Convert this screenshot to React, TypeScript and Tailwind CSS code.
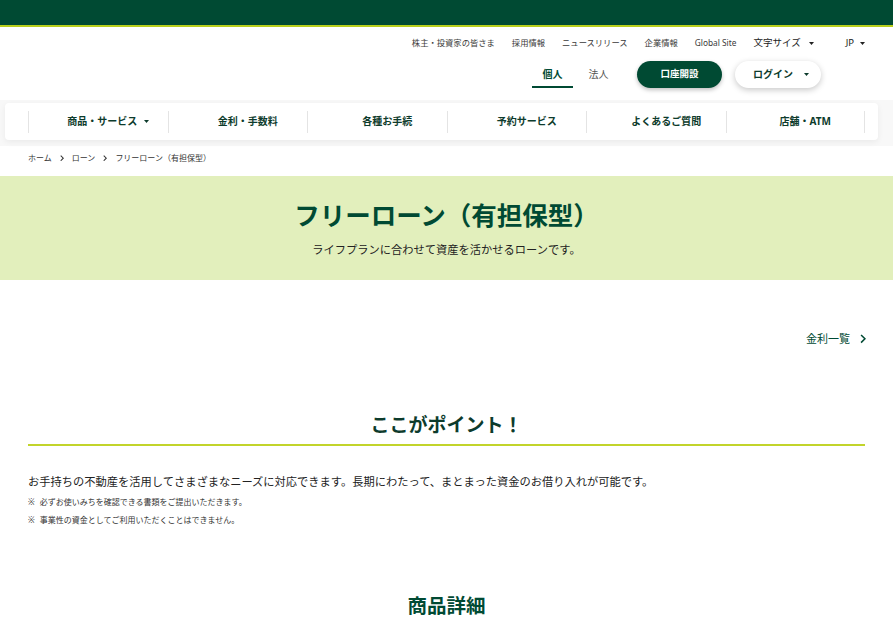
import type { ReactNode } from "react";

const topLinks = ["株主・投資家の皆さま", "採用情報", "ニュースリリース", "企業情報", "Global Site"];
const navItems = ["商品・サービス", "金利・手数料", "各種お手続", "予約サービス", "よくあるご質問", "店舗・ATM"];

function Caret({ className = "" }: { className?: string }) {
  return (
    <svg width="5" height="3" viewBox="0 0 5 3" className={className} fill="currentColor">
      <path d="M0 0h5L2.5 3z" />
    </svg>
  );
}

function Chevron({ size = 6, className = "" }: { size?: number; className?: string }) {
  return (
    <svg
      width={size}
      height={size * 1.6}
      viewBox="0 0 6 10"
      fill="none"
      stroke="currentColor"
      strokeWidth="1.6"
      className={className}
    >
      <path d="M1 1l4 4-4 4" />
    </svg>
  );
}

function Crumb({ children, last = false }: { children: ReactNode; last?: boolean }) {
  return (
    <span className="flex items-center">
      <span>{children}</span>
      {!last && <Chevron size={4} className="mx-[8px] text-[#333]" />}
    </span>
  );
}

function Note({ children }: { children: ReactNode }) {
  return (
    <p className="mt-[6px] flex text-[8px] leading-[12px] text-[#333]">
      <span className="mr-[5px]">※</span>
      {children}
    </p>
  );
}

export default function App() {
  return (
    <div className="min-h-[1200px] bg-white text-[#333] font-['Noto_Sans','Noto_Sans_CJK_JP',sans-serif]">
      {/* brand bar */}
      <div className="h-[25px] bg-[#004a33]" />
      <div className="h-[2px] bg-[#b8cf1c]" />

      {/* header */}
      <header className="h-[73px] bg-white">
        <div className="ml-[28px] w-[837px]">
          <div className="flex h-[32px] items-center justify-end gap-[17px] text-[8.3px] text-[#3a3a3a]">
            {topLinks.map((l) => (
              <a key={l} className="whitespace-nowrap">
                {l}
              </a>
            ))}
            <span className="flex items-center gap-[8px] text-[9.5px] text-[#222]">
              文字サイズ
              <Caret />
            </span>
            <span className="ml-[15px] flex items-center gap-[6px] text-[9.5px] text-[#222]">
              JP
              <Caret />
            </span>
          </div>

          <div className="mt-[2px] flex h-[27px] items-center justify-end pr-[44px]">
            <div className="flex h-full gap-[5px]">
              <span className="flex w-[41px] items-center justify-center border-b-2 border-[#004a33] pt-[2px] text-[10px] font-bold text-[#004a33]">
                個人
              </span>
              <span className="flex w-[41px] items-center justify-center text-[10px] text-[#555]">法人</span>
            </div>
            <button className="ml-[18px] flex h-[27px] w-[85px] items-center justify-center rounded-full bg-[#004a33] text-[9.5px] font-bold text-white shadow-[0_2px_4px_rgba(0,0,0,0.25)]">
              口座開設
            </button>
            <button className="ml-[13px] flex h-[27px] w-[86px] items-center justify-center gap-[11px] rounded-full bg-white pl-[6px] text-[10px] font-bold text-[#0d3b2c] shadow-[0_2px_6px_rgba(0,0,0,0.22)]">
              ログイン
              <Caret />
            </button>
          </div>
        </div>
      </header>

      {/* global nav */}
      <div className="h-[46px] bg-[#f8f8f8] pt-[3px]">
        <nav className="mx-[5px] flex h-[37px] w-[873px] items-center rounded-[4px] bg-white pl-[23px] shadow-[0_2px_6px_rgba(0,0,0,0.06)]">
          <div className="grid w-[837px] grid-cols-6">
            {navItems.map((n, i) => (
              <div
                key={n}
                className={`flex h-[22px] items-center justify-center gap-[7px] border-l border-[#e4e4e4] pl-[20px] text-[10px] font-bold text-[#0d3b2c] ${
                  i === navItems.length - 1 ? "border-r" : ""
                }`}
              >
                {n}
                {i === 0 && <Caret />}
              </div>
            ))}
          </div>
        </nav>
      </div>

      {/* breadcrumb */}
      <div className="ml-[28px] flex h-[30px] items-center pb-[6px] text-[8px] text-[#333]">
        <Crumb>ホーム</Crumb>
        <Crumb>ローン</Crumb>
        <Crumb last>フリーローン（有担保型）</Crumb>
      </div>

      {/* page title */}
      <section className="h-[104px] bg-[#e2efbc] pt-[24px] text-center">
        <h1 className="text-[25.5px] font-bold leading-[30px] text-[#004a33]">フリーローン（有担保型）</h1>
        <p className="mt-[12px] text-[11.25px] leading-[16px] text-[#222]">ライフプランに合わせて資産を活かせるローンです。</p>
      </section>

      <div className="ml-[28px] w-[837px]">
        <div className="flex h-[118px] items-center justify-end">
          <a className="flex items-center gap-[10px] text-[11px] text-[#004a33]">
            金利一覧
            <Chevron size={6} className="mr-[-1px]" />
          </a>
        </div>

        {/* point */}
        <h2 className="pt-[15px] text-center text-[19px] font-bold leading-[24px] text-[#0d3b2c]">ここがポイント！</h2>
        <div className="mt-[7px] h-[2px] bg-[#c2d42b]" />

        <p className="mt-[28px] text-[11.25px] leading-[16px] text-[#222]">
          お手持ちの不動産を活用してさまざまなニーズに対応できます。長期にわたって、まとまった資金のお借り入れが可能です。
        </p>
        <Note>必ずお使いみちを確認できる書類をご提出いただきます。</Note>
        <Note>事業性の資金としてご利用いただくことはできません。</Note>

        {/* details */}
        <h2 className="mt-[68px] text-center text-[19.5px] font-bold leading-[24px] text-[#004a33]">商品詳細</h2>
      </div>
    </div>
  );
}
